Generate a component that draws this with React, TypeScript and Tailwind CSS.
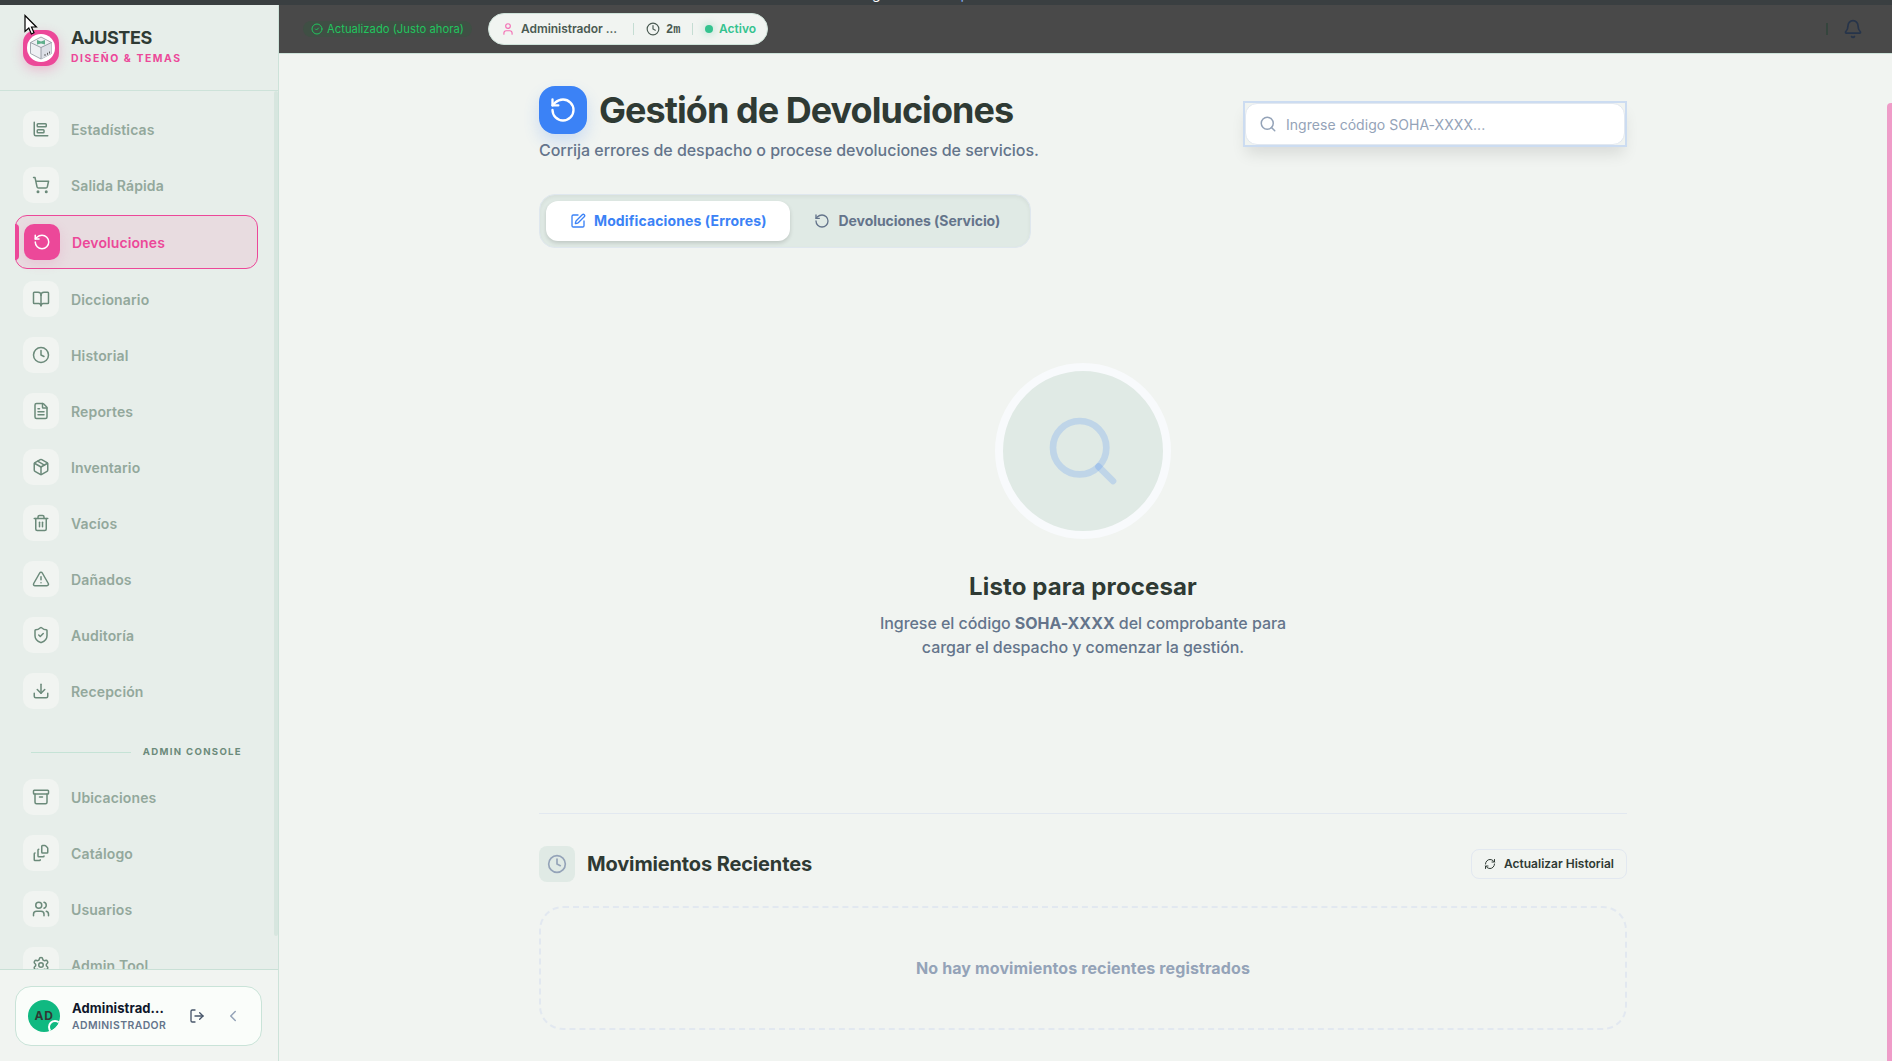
import type { ReactNode } from 'react'
import {
  Archive,
  Bell,
  BookOpen,
  ChartBarBig,
  ChevronLeft,
  CircleCheck,
  Clock,
  Download,
  FileStack,
  FileText,
  LogOut,
  Package,
  RefreshCw,
  RotateCcw,
  Search,
  Settings,
  ShieldCheck,
  ShoppingCart,
  SquarePen,
  Trash2,
  TriangleAlert,
  User,
  Users,
  type LucideIcon,
} from 'lucide-react'

type NavEntry = {
  label: string
  icon: LucideIcon
  active?: boolean
}

const mainItems: NavEntry[] = [
  { label: 'Estadísticas', icon: ChartBarBig },
  { label: 'Salida Rápida', icon: ShoppingCart },
  { label: 'Devoluciones', icon: RotateCcw, active: true },
  { label: 'Diccionario', icon: BookOpen },
  { label: 'Historial', icon: Clock },
  { label: 'Reportes', icon: FileText },
  { label: 'Inventario', icon: Package },
  { label: 'Vacíos', icon: Trash2 },
  { label: 'Dañados', icon: TriangleAlert },
  { label: 'Auditoría', icon: ShieldCheck },
  { label: 'Recepción', icon: Download },
]

const adminItems: NavEntry[] = [
  { label: 'Ubicaciones', icon: Archive },
  { label: 'Catálogo', icon: FileStack },
  { label: 'Usuarios', icon: Users },
  { label: 'Admin Tool', icon: Settings },
]

function NavItem({ label, icon: Icon, active }: NavEntry) {
  if (active) {
    return (
      <a className="relative flex h-[54px] shrink-0 items-center gap-3 rounded-xl border border-[#ec4899] bg-[#e8dce0] px-2">
        <span className="absolute -left-px top-2 h-9 w-1 rounded-r bg-[#ec4899]" />
        <span className="flex size-9 items-center justify-center rounded-[10px] bg-[#ec4899] text-white shadow-[0_4px_12px_rgba(236,72,153,0.15)]">
          <Icon size={18} />
        </span>
        <span className="pt-0.5 text-sm font-semibold tracking-[0.1px] text-[#ec4899]">{label}</span>
      </a>
    )
  }
  return (
    <a className="flex h-[52px] shrink-0 items-center gap-3 px-2">
      <span className="flex size-9 items-center justify-center rounded-[10px] bg-[#f1f4f1] text-[#6b8a7a]">
        <Icon size={18} />
      </span>
      <span className="pt-0.5 text-sm font-semibold tracking-[0.14px] text-[#93a89c]">{label}</span>
    </a>
  )
}

function Logo() {
  return (
    <span className="flex size-9 items-center justify-center rounded-[13px] bg-[#ec4899] shadow-[0_4px_12px_rgba(236,72,153,0.3)]">
      <svg width="28" height="28" viewBox="0 0 28 28">
        <circle cx="14" cy="14" r="14" fill="#fff" />
        <path d="M14 3 L24.5 8.5 V19.5 L14 25 L3.5 19.5 V8.5 Z" fill="#eef0f3" stroke="#9a9fa8" strokeWidth="0.9" />
        <path d="M14 13.5 L24.5 8.5 V19.5 L14 25 Z" fill="#dcdfe6" />
        <path d="M3.5 8.5 L14 13.5 L24.5 8.5 M14 13.5 V25" fill="none" stroke="#8f949e" strokeWidth="0.9" />
        <path d="M10 6 L14 7.5 L18 6 V10.5 L14 9.5 L10 10.5 Z" fill="#5fae8b" />
        <path d="M18 20 V22 M20.5 18.8 V20.8 M22.5 17.5 V19.5" stroke="#555" strokeWidth="0.9" />
      </svg>
    </span>
  )
}

function Sidebar() {
  return (
    <aside className="flex w-[279px] shrink-0 flex-col border-r border-[#cde2d9] bg-[#e7eeea]">
      <div className="flex h-[86px] shrink-0 items-center gap-3 border-b border-[#cde2d9] pl-[23px]">
        <Logo />
        <div className="flex flex-col pb-0.5">
          <span className="text-lg leading-[22px] font-bold tracking-[-0.4px] text-[#2f3a34]">AJUSTES</span>
          <span className="mt-0.5 text-[10.4px] leading-4 font-bold tracking-[1.56px] text-[#ec4899]">DISEÑO &amp; TEMAS</span>
        </div>
      </div>

      <div className="flex min-h-0 flex-1 overflow-hidden">
        <nav className="flex w-[274px] flex-col gap-1 pt-3 pr-4 pl-[15px]">
          {mainItems.map((item) => (
            <NavItem key={item.label} {...item} />
          ))}
          <div className="flex h-[46px] shrink-0 items-center gap-3 pt-4 pr-4 pl-4">
            <span className="h-px flex-1 bg-[#c5e3d6]" />
            <span className="text-[9.6px] font-bold tracking-[1.32px] text-[#6b8a7a]">ADMIN CONSOLE</span>
          </div>
          {adminItems.map((item) => (
            <NavItem key={item.label} {...item} />
          ))}
        </nav>
        <div className="h-[845px] w-1 rounded-full bg-[#d7e6df]" />
      </div>

      <div className="flex h-[92px] shrink-0 items-start border-t border-[#c9e0d6] bg-[#f1f4f1] pt-4 pl-[15px]">
        <div className="flex h-[60px] w-[247px] items-center rounded-2xl border border-[#c9e3d8] bg-[#fafdfa] pl-3">
          <span className="relative flex size-8 items-center justify-center overflow-hidden rounded-full bg-[#10b981] text-xs font-bold tracking-[0.6px] text-[#2f3a34]">
            AD
            <span className="absolute -right-0.5 -bottom-0.5 size-3.5 rounded-full border-2 border-white bg-[#10b981]" />
          </span>
          <div className="ml-3 flex w-[104px] flex-col pt-0.5">
            <span className="text-[13px] leading-[17px] font-bold tracking-[0.1px] text-[#0f172a]">Administrad...</span>
            <span className="text-[10.4px] leading-[17px] font-semibold tracking-[0.44px] text-[#64748b]">ADMINISTRADOR</span>
          </div>
          <LogOut size={16} className="ml-[13px] text-[#475569]" />
          <ChevronLeft size={18} className="ml-[19px] text-[#94a3b8]" />
        </div>
      </div>
    </aside>
  )
}

function TopBar() {
  return (
    <header className="flex h-[49px] shrink-0 items-center border-b border-[#cde2d9] bg-[#494949] pl-6">
      <div className="flex h-4 w-[169px] items-center gap-1 rounded-full bg-[#3f4f44] pl-2 text-[11.2px] tracking-[0.04px] text-[#22c55e]">
        <CircleCheck size={12} />
        <span className="whitespace-nowrap">Actualizado (Justo ahora)</span>
      </div>
      <div className="ml-4 flex h-8 w-[280px] items-center rounded-full border border-[#cfe3da] bg-[#f1f4f1] text-xs font-semibold text-[#4a5a52]">
        <User size={14} className="ml-3 text-[#f472b6]" />
        <span className="ml-1.5 w-[112px] tracking-[-0.05px]">Administrador ...</span>
        <span className="h-3 w-px bg-[#c5ddd3]" />
        <Clock size={14} className="ml-3" />
        <span className="ml-1.5 w-[26px] pt-px font-['Liberation_Mono',monospace]">2m</span>
        <span className="h-3 w-px bg-[#c5ddd3]" />
        <span className="ml-3 size-2 rounded-full bg-[#34c38f] shadow-[0_0_8px_rgba(52,195,143,0.5)]" />
        <span className="ml-1.5 text-[#34c38f]">Activo</span>
      </div>
      <div className="mr-[29px] ml-auto flex items-center gap-[15px]">
        <span className="h-3 w-0.5 bg-[#35453d]" />
        <Bell size={20} className="text-[#26344a]" />
      </div>
    </header>
  )
}

function Tab({ icon, children, active }: { icon: ReactNode; children: ReactNode; active?: boolean }) {
  return (
    <button
      className={
        active
          ? 'flex h-10 w-[245px] items-center gap-2 rounded-xl bg-white pl-6 text-sm font-bold tracking-[0.12px] text-[#3b82f6] shadow-[0_2px_4px_rgba(0,0,0,0.15)]'
          : 'flex h-10 w-[234px] items-center gap-2 rounded-xl pl-6 text-sm font-bold tracking-[-0.05px] text-[#64748b]'
      }
    >
      {icon}
      <span className="whitespace-nowrap">{children}</span>
    </button>
  )
}

function ReturnsPage() {
  return (
    <main className="mx-auto flex w-[1088px] flex-col pt-8">
      <div className="flex items-start justify-between">
        <div>
          <div className="flex h-12 items-center gap-3">
            <span className="flex size-12 items-center justify-center rounded-2xl bg-[#3b82f6] text-white shadow-[0_8px_16px_rgba(59,130,246,0.2)]">
              <RotateCcw size={28} />
            </span>
            <h1 className="text-4xl font-bold tracking-[-0.96px] text-[#2f3a34]">Gestión de Devoluciones</h1>
          </div>
          <p className="mt-1 text-base font-medium tracking-[-0.04px] text-[#64748b]">
            Corrija errores de despacho o procese devoluciones de servicios.
          </p>
        </div>
        <div className="mt-[15px] border-2 border-[#ccdcf1] shadow-[0_10px_15px_-3px_rgba(0,0,0,0.1)]">
          <div className="flex h-[42px] w-[380px] items-center gap-[9px] rounded-xl border border-[#e2e8f0] bg-white pl-[13px]">
            <Search size={18} className="text-[#94a3b8]" />
            <span className="pt-0.5 text-sm tracking-[0.04px] text-[#94a3b8]">Ingrese código SOHA-XXXX...</span>
          </div>
        </div>
      </div>

      <div className="mt-8 flex h-[54px] w-[492px] items-center rounded-2xl border border-[#dfe7ee] bg-[#e0eae5] px-1.5 shadow-[inset_0_2px_4px_rgba(0,0,0,0.05)]">
        <Tab active icon={<SquarePen size={16} />}>
          Modificaciones (Errores)
        </Tab>
        <Tab icon={<RotateCcw size={16} />}>Devoluciones (Servicio)</Tab>
      </div>

      {/* Empty state */}
      <section className="mt-[115px] flex flex-col items-center">
        <div className="flex size-44 items-center justify-center rounded-full border-8 border-[#f8fafc] bg-[#e0eae5]">
          <Search size={80} className="text-[#3b82f6]/20" />
        </div>
        <h2 className="mt-8 text-2xl leading-8 font-bold tracking-[0.13px] text-[#2f3a34]">Listo para procesar</h2>
        <p className="mt-2 w-[420px] text-center text-base leading-6 font-medium tracking-[-0.05px] text-[#64748b]">
          Ingrese el código <strong className="font-bold">SOHA-XXXX</strong> del comprobante para cargar el despacho y comenzar la gestión.
        </p>
      </section>

      <section className="mt-[154px] border-t border-[#e2e8f0] pt-8">
        <div className="flex items-center">
          <span className="flex size-9 items-center justify-center rounded-lg bg-[#e0eae5] text-[#94a3b8]">
            <Clock size={20} />
          </span>
          <h3 className="ml-3 text-xl font-bold tracking-[-0.14px] text-[#2f3a34]">Movimientos Recientes</h3>
          <button className="ml-auto flex h-[30px] w-[156px] items-center gap-2 rounded-lg border border-[#e2e8f0] pl-3 text-xs font-semibold text-[#2f3a34]">
            <RefreshCw size={12} />
            Actualizar Historial
          </button>
        </div>
        <div className="mt-6 flex h-[124px] items-center justify-center rounded-3xl border-2 border-dashed border-[#e2e8f0] text-base font-bold tracking-[0.12px] text-[#94a3b8]">
          No hay movimientos recientes registrados
        </div>
      </section>
    </main>
  )
}

export default function App() {
  return (
    <div className="flex h-[1061px] w-[1892px] flex-col overflow-hidden bg-[#f1f4f1] font-['Inter',sans-serif]">
      {/* Bottom edge of the notice bar, mostly scrolled away */}
      <div className="flex h-[5px] shrink-0 items-start gap-[80px] overflow-hidden bg-[#3a3f41] pl-[872px] text-sm leading-4">
        <span className="-mt-[14px] text-white">g</span>
        <span className="-mt-[14px] text-[#8ab4f8]">p</span>
      </div>
      <div className="flex min-h-0 flex-1">
        <Sidebar />
        <div className="flex min-w-0 flex-1 flex-col">
          <TopBar />
          <div className="flex min-h-0 flex-1">
            <div className="flex-1">
              <ReturnsPage />
            </div>
            <div className="mt-[49px] w-[5px] rounded-tl bg-[#ef9cc8]" />
          </div>
        </div>
      </div>

      {/* Mouse pointer */}
      <svg className="absolute top-[14px] left-[24px]" width="14" height="22" viewBox="0 0 14 22">
        <path d="M1 1.5 V17.5 L4.8 14 L7.4 20 L10 18.8 L7.5 13 H12.4 Z" fill="#fff" stroke="#000" strokeWidth="1.2" />
      </svg>
    </div>
  )
}
